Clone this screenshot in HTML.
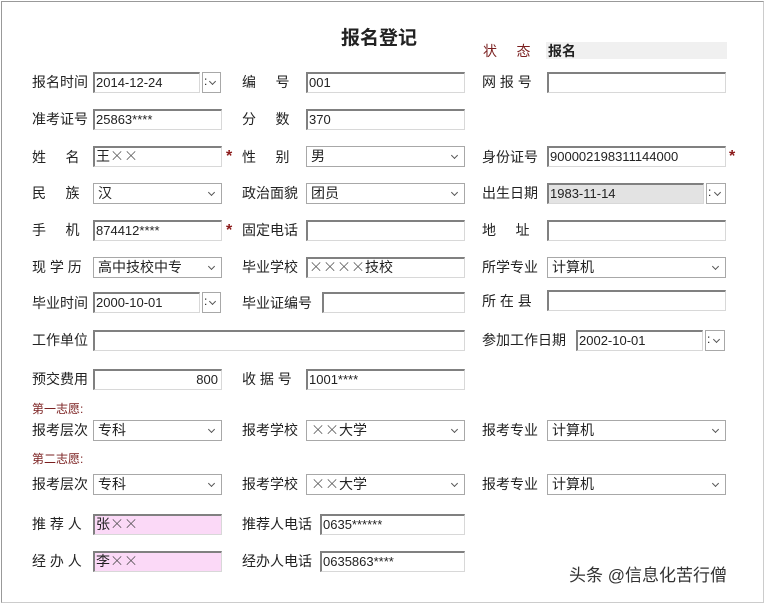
<!DOCTYPE html>
<html><head><meta charset="utf-8"><style>
*{margin:0;padding:0;box-sizing:border-box}
body{width:765px;height:605px;background:#fff;position:relative;overflow:hidden;font-family:"Liberation Sans","Noto Sans CJK SC","WenQuanYi Zen Hei",sans-serif;color:#222}
.frame{position:absolute;left:1px;top:1px;width:763px;height:602px;border:1px solid #999;border-right-color:#ccc;border-bottom-color:#ccc}
.l{position:absolute;font-size:14px;line-height:16px;white-space:pre}
.t{position:absolute;height:21px;border:1px solid #d8d8d8;border-top:2px solid #808080;border-left:2px solid #808080;font-size:13px;line-height:17px;padding-left:1px;background:#fff;white-space:nowrap;overflow:hidden}
.c{position:absolute;height:21px;border:1px solid #a8a8a8;font-size:14px;line-height:19px;padding-left:4px;background:#fff;white-space:nowrap}
.c::after{content:"";position:absolute;right:7px;top:6px;width:4px;height:4px;border-right:1.5px solid #555;border-bottom:1.5px solid #555;transform:rotate(45deg)}
.b{position:absolute;width:19px;height:21px;border:1px solid #a8a8a8;background:#fff}
.b::before{content:":";position:absolute;left:1px;top:1px;font-size:12px}
.b::after{content:"";position:absolute;right:5px;top:6px;width:4px;height:4px;border-right:1.5px solid #555;border-bottom:1.5px solid #555;transform:rotate(45deg)}
.s{position:absolute;color:#8b1a1a;font-size:16px;font-weight:bold}
.pk{background:#fbd9f7}
.gr{background:#e3e3e3}
.red{color:#7a1f1f;font-size:12px}
.x{font-family:"Noto Sans CJK SC","WenQuanYi Zen Hei",sans-serif;font-weight:300;color:#444}
</style></head><body>
<div class="frame"></div>
<div class="l" style="left:341px;top:28px;font-size:19px;line-height:22px;font-weight:bold">报名登记</div>
<div class="l" style="left:483px;top:43px;color:#7a1f1f">状&nbsp;&nbsp;&nbsp;&nbsp;&nbsp;态</div>
<div style="position:absolute;left:546px;top:42px;width:181px;height:17px;background:#f0f0f0"></div>
<div class="l" style="left:548px;top:43px;font-weight:bold">报名</div>

<div class="l" style="left:32px;top:74px">报名时间</div>
<div class="t" style="left:93px;top:72px;width:107px">2014-12-24</div>
<div class="b" style="left:202px;top:72px"></div>
<div class="l" style="left:242px;top:74px">编&nbsp;&nbsp;&nbsp;&nbsp;&nbsp;号</div>
<div class="t" style="left:306px;top:72px;width:159px">001</div>
<div class="l" style="left:482px;top:74px">网 报 号</div>
<div class="t" style="left:547px;top:72px;width:179px"></div>

<div class="l" style="left:32px;top:111px">准考证号</div>
<div class="t" style="left:93px;top:109px;width:129px">25863****</div>
<div class="l" style="left:242px;top:111px">分&nbsp;&nbsp;&nbsp;&nbsp;&nbsp;数</div>
<div class="t" style="left:306px;top:109px;width:159px">370</div>

<div class="l" style="left:32px;top:149px">姓&nbsp;&nbsp;&nbsp;&nbsp;&nbsp;名</div>
<div class="t" style="left:93px;top:146px;width:129px;font-size:14px">王<span class="x">××</span></div>
<div class="s" style="left:226px;top:148px">*</div>
<div class="l" style="left:242px;top:149px">性&nbsp;&nbsp;&nbsp;&nbsp;&nbsp;别</div>
<div class="c" style="left:306px;top:146px;width:159px">男</div>
<div class="l" style="left:482px;top:149px">身份证号</div>
<div class="t" style="left:547px;top:146px;width:179px">900002198311144000</div>
<div class="s" style="left:729px;top:148px">*</div>

<div class="l" style="left:32px;top:185px">民&nbsp;&nbsp;&nbsp;&nbsp;&nbsp;族</div>
<div class="c" style="left:93px;top:183px;width:129px">汉</div>
<div class="l" style="left:242px;top:185px">政治面貌</div>
<div class="c" style="left:306px;top:183px;width:159px">团员</div>
<div class="l" style="left:482px;top:185px">出生日期</div>
<div class="t gr" style="left:547px;top:183px;width:157px">1983-11-14</div>
<div class="b" style="left:706px;top:183px;width:20px"></div>

<div class="l" style="left:32px;top:222px">手&nbsp;&nbsp;&nbsp;&nbsp;&nbsp;机</div>
<div class="t" style="left:93px;top:220px;width:129px">874412****</div>
<div class="s" style="left:226px;top:222px">*</div>
<div class="l" style="left:242px;top:222px">固定电话</div>
<div class="t" style="left:306px;top:220px;width:159px"></div>
<div class="l" style="left:482px;top:222px">地&nbsp;&nbsp;&nbsp;&nbsp;&nbsp;址</div>
<div class="t" style="left:547px;top:220px;width:179px"></div>

<div class="l" style="left:32px;top:259px">现 学 历</div>
<div class="c" style="left:93px;top:257px;width:129px">高中技校中专</div>
<div class="l" style="left:242px;top:259px">毕业学校</div>
<div class="t" style="left:306px;top:257px;width:159px;font-size:14px"><span class="x">××××</span>技校</div>
<div class="l" style="left:482px;top:259px">所学专业</div>
<div class="c" style="left:547px;top:257px;width:179px">计算机</div>

<div class="l" style="left:32px;top:295px">毕业时间</div>
<div class="t" style="left:93px;top:292px;width:107px">2000-10-01</div>
<div class="b" style="left:202px;top:292px"></div>
<div class="l" style="left:242px;top:295px">毕业证编号</div>
<div class="t" style="left:322px;top:292px;width:143px"></div>
<div class="l" style="left:482px;top:293px">所 在 县</div>
<div class="t" style="left:547px;top:290px;width:179px"></div>

<div class="l" style="left:32px;top:332px">工作单位</div>
<div class="t" style="left:93px;top:330px;width:372px"></div>
<div class="l" style="left:482px;top:332px">参加工作日期</div>
<div class="t" style="left:576px;top:330px;width:127px">2002-10-01</div>
<div class="b" style="left:705px;top:330px;width:20px"></div>

<div class="l" style="left:32px;top:371px">预交费用</div>
<div class="t" style="left:93px;top:369px;width:129px;text-align:right;padding-right:3px">800</div>
<div class="l" style="left:242px;top:371px">收 据 号</div>
<div class="t" style="left:306px;top:369px;width:159px">1001****</div>

<div class="l red" style="left:32px;top:401px">第一志愿:</div>
<div class="l" style="left:32px;top:422px">报考层次</div>
<div class="c" style="left:93px;top:420px;width:129px">专科</div>
<div class="l" style="left:242px;top:422px">报考学校</div>
<div class="c" style="left:306px;top:420px;width:159px"><span class="x">××</span>大学</div>
<div class="l" style="left:482px;top:422px">报考专业</div>
<div class="c" style="left:547px;top:420px;width:179px">计算机</div>

<div class="l red" style="left:32px;top:451px">第二志愿:</div>
<div class="l" style="left:32px;top:476px">报考层次</div>
<div class="c" style="left:93px;top:474px;width:129px">专科</div>
<div class="l" style="left:242px;top:476px">报考学校</div>
<div class="c" style="left:306px;top:474px;width:159px"><span class="x">××</span>大学</div>
<div class="l" style="left:482px;top:476px">报考专业</div>
<div class="c" style="left:547px;top:474px;width:179px">计算机</div>

<div class="l" style="left:32px;top:516px">推 荐 人</div>
<div class="t pk" style="left:93px;top:514px;width:129px;font-size:14px">张<span class="x">××</span></div>
<div class="l" style="left:242px;top:516px">推荐人电话</div>
<div class="t" style="left:320px;top:514px;width:145px">0635******</div>
<div class="l" style="left:32px;top:553px">经 办 人</div>
<div class="t pk" style="left:93px;top:551px;width:129px;font-size:14px">李<span class="x">××</span></div>
<div class="l" style="left:242px;top:553px">经办人电话</div>
<div class="t" style="left:320px;top:551px;width:145px">0635863****</div>

<div class="l" style="left:569px;top:566px;font-size:17px;line-height:20px;color:#333">头条 @信息化苦行僧</div>
</body></html>
